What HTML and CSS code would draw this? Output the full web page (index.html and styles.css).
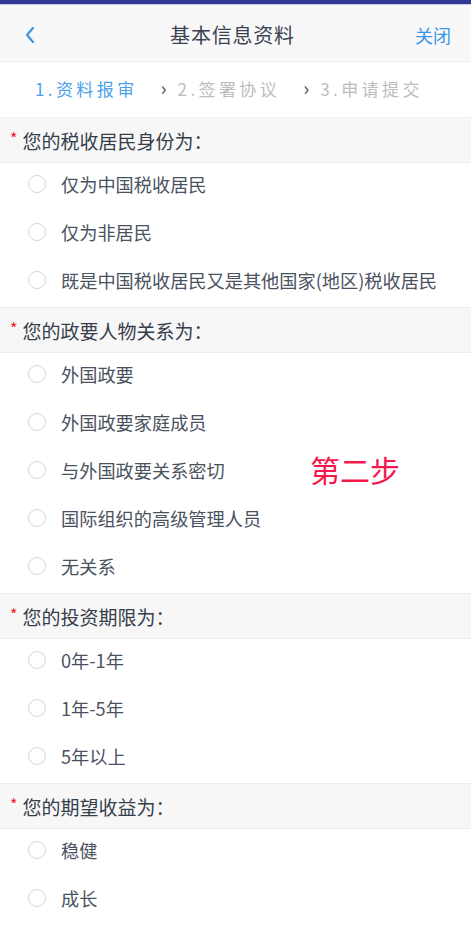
FILE: index.html
```html
<!DOCTYPE html>
<html>
<head>
  <meta charset="utf-8">
  <title>基本信息资料</title>
  <link rel="stylesheet" href="styles.css">
</head>
<body>

<div class="topbar"></div>
<div class="navbar">
  <svg class="back" width="12" height="18" viewBox="0 0 12 18"><polyline points="9,2 3,9 9,16" fill="none" stroke="#3b97e6" stroke-width="2.2" stroke-linecap="round" stroke-linejoin="round"/></svg>
  <div class="title">基本信息资料</div>
  <div class="close">关闭</div>
</div>

<div class="steps">
  <span class="step active">1.资料报审</span>
  <span class="arrow">›</span>
  <span class="step">2.签署协议</span>
  <span class="arrow">›</span>
  <span class="step">3.申请提交</span>
</div>

<div class="form">
  <div class="section">
    <div class="section-head"><span class="star">*</span>您的税收居民身份为：</div>
    <div class="option"><span class="radio"></span>仅为中国税收居民</div>
    <div class="option"><span class="radio"></span>仅为非居民</div>
    <div class="option"><span class="radio"></span>既是中国税收居民又是其他国家(地区)税收居民</div>
  </div>
  <div class="section">
    <div class="section-head"><span class="star">*</span>您的政要人物关系为：</div>
    <div class="option"><span class="radio"></span>外国政要</div>
    <div class="option"><span class="radio"></span>外国政要家庭成员</div>
    <div class="option"><span class="radio"></span>与外国政要关系密切</div>
    <div class="option"><span class="radio"></span>国际组织的高级管理人员</div>
    <div class="option"><span class="radio"></span>无关系</div>
  </div>
  <div class="section">
    <div class="section-head"><span class="star">*</span>您的投资期限为：</div>
    <div class="option"><span class="radio"></span>0年-1年</div>
    <div class="option"><span class="radio"></span>1年-5年</div>
    <div class="option"><span class="radio"></span>5年以上</div>
  </div>
  <div class="section">
    <div class="section-head"><span class="star">*</span>您的期望收益为：</div>
    <div class="option"><span class="radio"></span>稳健</div>
    <div class="option"><span class="radio"></span>成长</div>
  </div>

  <div class="note">第二步</div>
</div>

</body>
</html>
```

FILE: styles.css
```css
body {
  margin: 0;
  font-family: "Noto Sans CJK SC", "Noto Sans", sans-serif;
  background: #fff;
  overflow: hidden;
}
.topbar {
  height: 4px;
  background-color: #2f3b96;
  border-bottom: 1px solid #c9cbe0;
}
.navbar {
  height: 57px;
  background-color: #f8f8f9;
  border-bottom: 1px solid #ececec;
  display: flex;
  align-items: center;
  justify-content: space-between;
  padding: 3px 20px 0 24px;
  box-sizing: border-box;
}
.title {
  font-size: 20px;
  letter-spacing: 0.8px;
  color: #3a4250;
  margin-left: 14px;
}
.close {
  font-size: 18px;
  color: #3b97e6;
}
.steps {
  height: 55px;
  display: flex;
  align-items: center;
  padding: 0 0 2px 35px;
  box-sizing: border-box;
}
.step {
  font-size: 17px;
  letter-spacing: 3.4px;
  color: #bdbdbd;
}
.step.active {
  color: #4ba2ea;
}
.arrow {
  font-size: 20px;
  color: #555;
  margin: -3px 11px 0 23px;
}
.form {
  position: relative;
}
.section-head {
  height: 44px;
  background-color: #f7f7f8;
  border-top: 1px solid #ececec;
  border-bottom: 1px solid #ececec;
  display: flex;
  align-items: center;
  padding-left: 10px;
  font-size: 19px;
  color: #363e4a;
}
.section:first-child .section-head {
  border-top: 1px solid #f3f3f3;
}
.star {
  color: #f01c1c;
  font-size: 16px;
  margin-right: 5px;
  margin-top: -4px;
}
.option {
  height: 48px;
  box-sizing: border-box;
  padding-bottom: 6px;
  display: flex;
  align-items: center;
  font-size: 18.2px;
  color: #4a5260;
}
.radio {
  width: 16px;
  height: 16px;
  border: 1.5px solid #d6d6d6;
  border-radius: 50%;
  margin: 0 15px 0 28px;
  flex-shrink: 0;
}
.note {
  position: absolute;
  left: 310px;
  top: 330px;
  font-size: 30px;
  color: #f5194b;
}
```
